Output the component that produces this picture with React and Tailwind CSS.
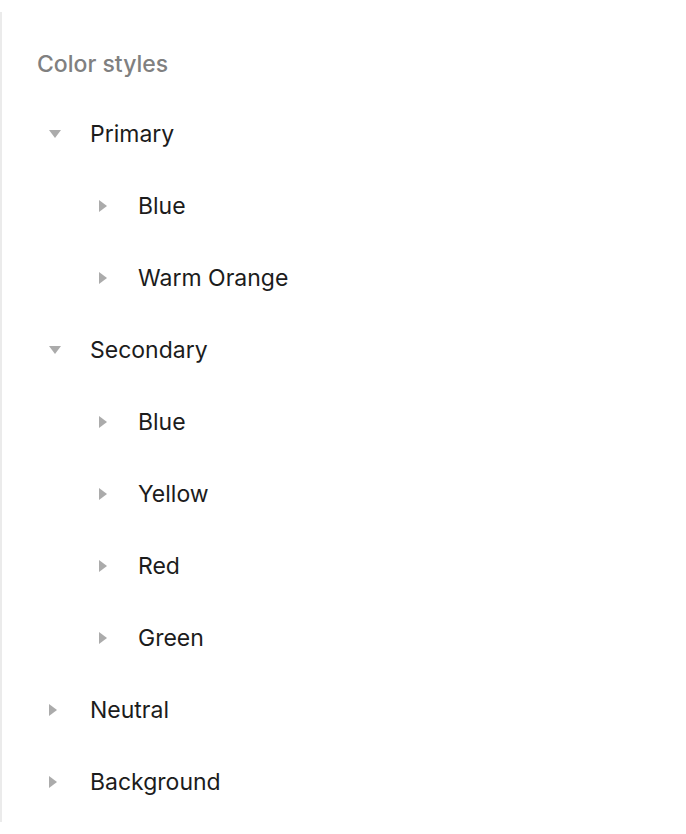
import React from "react";

const tree = [
  {
    name: "Primary",
    open: true,
    children: ["Blue", "Warm Orange"],
  },
  {
    name: "Secondary",
    open: true,
    children: ["Blue", "Yellow", "Red", "Green"],
  },
  { name: "Neutral", open: false, children: [] },
  { name: "Background", open: false, children: [] },
];

function Caret({ open }) {
  if (open) {
    return (
      <svg width="12" height="8" viewBox="0 0 12 8" className="shrink-0">
        <path d="M0 0 L12 0 L6 8 Z" fill="#ababab" />
      </svg>
    );
  }
  return (
    <svg width="8" height="12" viewBox="0 0 8 12" className="shrink-0">
      <path d="M0 0 L8 6 L0 12 Z" fill="#ababab" />
    </svg>
  );
}

function Row({ label, open, level }) {
  return (
    <div
      className={`flex items-center h-[72px] ${level === 0 ? "pl-[47px]" : "pl-[97px]"}`}
    >
      <div className={`flex items-center ${level === 0 ? "w-[41px]" : "w-[39px]"}`}>
        <Caret open={open} />
      </div>
      <span className="text-[23px] text-[#1c1c1c] leading-none">{label}</span>
    </div>
  );
}

export default function App() {
  return (
    <div
      className="bg-white w-[686px] h-[834px] pt-[12px]"
      style={{ fontFamily: "Inter, 'Noto Sans', sans-serif" }}
    >
      <div className="h-[810px] border-l-2 border-[#ebebeb] pt-[36px]">
        <div className="h-[32px] flex items-center pl-[35px] mb-[18px]">
          <span className="text-[23px] font-medium text-[#808080] leading-none">
            Color styles
          </span>
        </div>
        {tree.map((group) => (
          <div key={group.name}>
            <Row label={group.name} open={group.open} level={0} />
            {group.open &&
              group.children.map((c) => (
                <Row key={c} label={c} open={false} level={1} />
              ))}
          </div>
        ))}
      </div>
    </div>
  );
}
